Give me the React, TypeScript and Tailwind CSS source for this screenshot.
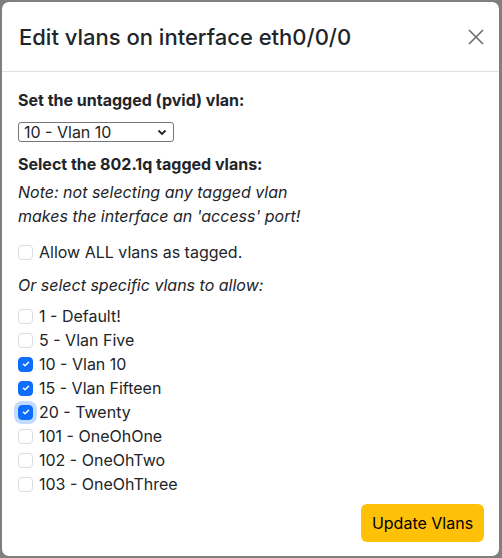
import { useState } from 'react';

interface Vlan {
  id: number;
  name: string;
}

const vlans: Vlan[] = [
  { id: 1, name: 'Default!' },
  { id: 5, name: 'Vlan Five' },
  { id: 10, name: 'Vlan 10' },
  { id: 15, name: 'Vlan Fifteen' },
  { id: 20, name: 'Twenty' },
  { id: 101, name: 'OneOhOne' },
  { id: 102, name: 'OneOhTwo' },
  { id: 103, name: 'OneOhThree' },
];

function Check({ checked, focused }: { checked: boolean; focused?: boolean }) {
  return (
    <span
      className={[
        'w-[15px] h-[15px] rounded-[4px] border flex items-center justify-center shrink-0',
        checked ? 'bg-[#0d6efd] border-[#0d6efd]' : 'bg-white border-[#d9dce0]',
        focused ? 'ring-4 ring-[#0d6efd]/25' : '',
      ].join(' ')}
    >
      {checked && (
        <svg className="w-[10px] h-[10px]" viewBox="0 0 20 20" fill="none" aria-hidden="true">
          <path d="M5 10.5l3.2 3L15 6.5" stroke="#fff" strokeWidth={3} strokeLinecap="round" strokeLinejoin="round" />
        </svg>
      )}
    </span>
  );
}

export default function App() {
  const [tagged, setTagged] = useState<number[]>([10, 15, 20]);
  const [allowAll, setAllowAll] = useState(false);

  function toggle(id: number) {
    setTagged((t) => (t.includes(id) ? t.filter((x) => x !== id) : [...t, id]));
  }

  return (
    <div className="w-[502px] h-[558px] bg-[#7f7f7f] p-[2px] font-['Inter',sans-serif] text-[#212529]">
      <div className="w-[497px] h-[554px] bg-white rounded-[7px] flex flex-col">
        {/* Header */}
        <div className="h-[70px] border-b border-[#dee2e6] flex items-center justify-between pl-[17px] pr-[7px]">
          <h5 className="text-[22px] font-medium leading-[30px]">Edit vlans on interface eth0/0/0</h5>
          <button aria-label="Close" className="w-[32px] h-[32px] flex items-center justify-center text-[#6c6c6c]">
            <svg className="w-[16px] h-[16px]" viewBox="0 0 16 16" fill="none" stroke="currentColor" strokeWidth={1.6} aria-hidden="true">
              <path d="M1 1l14 14M15 1L1 15" />
            </svg>
          </button>
        </div>

        {/* Body */}
        <div className="flex-1 px-[16px] pt-[16px] text-[16px] leading-[24px]">
          <div className="font-bold">Set the untagged (pvid) vlan:</div>
          <div className="mt-[10px] w-[156px] h-[20px] border border-[#767676] rounded-[3px] flex items-center justify-between pl-[5px] pr-[6px] text-[16px] leading-[18px]">
            <span>10 - Vlan 10</span>
            <svg className="w-[10px] h-[10px]" viewBox="0 0 10 10" fill="none" stroke="#222" strokeWidth={1.8} aria-hidden="true">
              <path d="M1.5 3.5L5 7l3.5-3.5" />
            </svg>
          </div>

          <div className="mt-[10px] font-bold">Select the 802.1q tagged vlans:</div>
          <p className="mt-[4px] italic">
            Note: not selecting any tagged vlan
            <br />
            makes the interface an 'access' port!
          </p>

          <label className="mt-[12px] flex items-center gap-[6px]" onClick={() => setAllowAll(!allowAll)}>
            <Check checked={allowAll} />
            <span>Allow ALL vlans as tagged.</span>
          </label>

          <p className="mt-[9px] italic">Or select specific vlans to allow:</p>

          <div className="mt-[7px] flex flex-col">
            {vlans.map((v) => (
              <label key={v.id} className="flex items-center gap-[6px]" onClick={() => toggle(v.id)}>
                <Check checked={tagged.includes(v.id)} focused={v.id === 20} />
                <span>
                  {v.id} - {v.name}
                </span>
              </label>
            ))}
          </div>
        </div>

        {/* Footer */}
        <div className="flex justify-end pr-[15px] pb-[14px]">
          <button className="h-[38px] w-[123px] rounded-[6px] bg-[#ffc107] text-[16px] text-[#000]">Update Vlans</button>
        </div>
      </div>
    </div>
  );
}
